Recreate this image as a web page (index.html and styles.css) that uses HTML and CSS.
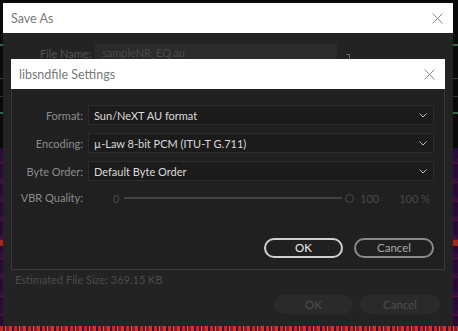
FILE: index.html
```html
<!DOCTYPE html>
<html>
<head>
<meta charset="utf-8">
<link rel="stylesheet" href="styles.css">
</head>
<body>
<div class="desktop">
  <section class="dlg save-as">
    <header class="titlebar">
      <span class="title">Save As</span>
      <svg class="close" width="11" height="11" viewBox="0 0 11 11"><path d="M0.5 0.5L10.5 10.5M10.5 0.5L0.5 10.5" stroke="#8a8a8a" stroke-width="1"/></svg>
    </header>
    <div class="body">
      <div class="file-row">
        <span class="file-lbl">File Name:</span>
        <div class="file-input">sampleNR_EQ.au</div>
        <span class="bracket"></span>
      </div>
      <div class="spacer"></div>
      <div class="est">Estimated File Size: 369.15 KB</div>
      <div class="btns">
        <button class="btn filled ok">OK</button>
        <button class="btn filled cancel">Cancel</button>
      </div>
    </div>
  </section>

  <section class="dlg settings">
    <header class="titlebar">
      <span class="title">libsndfile Settings</span>
      <svg class="close" width="11" height="11" viewBox="0 0 11 11"><path d="M0.5 0.5L10.5 10.5M10.5 0.5L0.5 10.5" stroke="#8a8a8a" stroke-width="1"/></svg>
    </header>
    <div class="body">
      <div class="form">
        <label class="lbl">Format:</label>
        <div class="select"><span>Sun/NeXT AU format</span><svg class="chev" width="8" height="5" viewBox="0 0 8 5"><path d="M0.5 0.5L4 4L7.5 0.5" fill="none" stroke="#bdbdbd" stroke-width="1"/></svg></div>
        <label class="lbl">Encoding:</label>
        <div class="select"><span>µ-Law 8-bit PCM (ITU-T G.711)</span><svg class="chev" width="8" height="5" viewBox="0 0 8 5"><path d="M0.5 0.5L4 4L7.5 0.5" fill="none" stroke="#bdbdbd" stroke-width="1"/></svg></div>
        <label class="lbl">Byte Order:</label>
        <div class="select"><span>Default Byte Order</span><svg class="chev" width="8" height="5" viewBox="0 0 8 5"><path d="M0.5 0.5L4 4L7.5 0.5" fill="none" stroke="#bdbdbd" stroke-width="1"/></svg></div>
        <label class="lbl">VBR Quality:</label>
        <div class="slider-row">
          <span class="min">0</span>
          <div class="track"></div>
          <span class="knob"></span>
          <span class="max">100</span>
          <span class="pct">100 %</span>
        </div>
      </div>
      <div class="btns">
        <button class="btn outline ok">OK</button>
        <button class="btn outline cancel">Cancel</button>
      </div>
    </div>
  </section>
</div>
</body>
</html>
```
FILE: styles.css
```css
* { box-sizing: border-box; }
html, body { margin: 0; padding: 0; }
body {
  width: 458px;
  height: 331px;
  overflow: hidden;
  font-family: Lato, "Open Sans", sans-serif;
}
.desktop {
  position: relative;
  width: 458px;
  height: 331px;
  background:
    linear-gradient(to bottom, transparent 0 44px, #2f6a48 44px 46px, transparent 46px 78px, #3a3a3a 78px 79px, transparent 79px 96px, #333 96px 97px, transparent 97px 112px, #2f6a48 112px 114px, transparent 114px),
    linear-gradient(to bottom, #0a0a0a 0 148px, transparent 148px),
    linear-gradient(to bottom, transparent 0 240px, #b02418 240px 246px, transparent 246px),
    repeating-linear-gradient(to bottom, #2a0a3c 0 7px, #3a0c40 7px 11px, #5a1238 11px 12px, #2c0838 12px 19px),
    #2a0a3a;
}
.desktop::after {
  content: "";
  position: absolute;
  left: 0; right: 0; bottom: 0;
  height: 5px;
  background: repeating-linear-gradient(90deg, #c8281c 0 3px, #5c1040 3px 5px, #e6601e 5px 6px, #8a1838 6px 9px, #d8321c 9px 12px, #3c0a40 12px 14px);
}
.dlg {
  position: absolute;
  display: flex;
  flex-direction: column;
}
.titlebar {
  height: 30px;
  background: #fff;
  display: flex;
  align-items: center;
  justify-content: space-between;
  padding: 0 10px 0 8px;
  flex: none;
}
.title {
  font-size: 12.5px;
  color: #7a7a7a;
}
.close { display: block; }

/* Save As */
.save-as {
  left: 3px;
  top: 3px;
  width: 450px;
  height: 323px;
  background: #232323;
}
.save-as .body {
  flex: 1;
  display: flex;
  flex-direction: column;
  padding: 11px 13px 12px 12px;
}
.file-row {
  display: flex;
  align-items: center;
  height: 18px;
}
.file-lbl {
  margin-left: 25px;
  width: 55px;
  font-size: 11px;
  color: #555;
  white-space: nowrap;
}
.file-input {
  width: 242px;
  height: 18px;
  background: #2b2b2b;
  font-size: 11px;
  color: #4a4a4a;
  padding: 2px 7px;
  white-space: nowrap;
}
.bracket {
  margin-left: 9px;
  margin-top: 8px;
  width: 4px;
  height: 7px;
  border-top: 1px solid #666;
  border-right: 1px solid #666;
}
.spacer { flex: 1; }
.est {
  font-size: 11px;
  color: #4c4c4c;
  line-height: 16px;
}
.save-as .btns {
  margin-top: 7px;
  display: flex;
  justify-content: flex-end;
  gap: 7px;
}
.btn {
  font-family: inherit;
  font-size: 11.5px;
  height: 19px;
  border-radius: 10px;
  padding: 0;
  line-height: 1;
}
.btn.filled {
  background: #2a2a2a;
  border: none;
  color: #4e4e4e;
}
.save-as .ok { width: 79px; }
.save-as .cancel { width: 80px; }

/* Settings */
.settings {
  left: 11px;
  top: 59px;
  width: 434px;
  height: 211px;
  background: #202020;
}
.settings .body {
  flex: 1;
  border: 1px solid #3a3a3a;
  border-top: none;
  display: flex;
  flex-direction: column;
  padding: 16px 10px 11px 5px;
}
.form {
  display: grid;
  grid-template-columns: 66px 1fr;
  column-gap: 5px;
  row-gap: 8px;
  align-items: center;
}
.lbl {
  text-align: right;
  font-size: 11px;
  color: #8c8c8c;
  white-space: nowrap;
}
.select {
  height: 20px;
  background: #1b1b1b;
  border: 1px solid #2c2c2c;
  display: flex;
  align-items: center;
  justify-content: space-between;
  padding: 0 6px 0 5px;
  font-size: 11px;
  color: #dadada;
  white-space: nowrap;
}
.chev { display: block; }
.slider-row {
  display: flex;
  align-items: center;
  height: 16px;
  margin-top: 1px;
  font-size: 11px;
  color: #4a4a4a;
  white-space: nowrap;
}
.min { margin-left: 25px; width: 6px; }
.track {
  width: 218px;
  height: 2px;
  background: #444;
  margin-left: 5px;
}
.knob {
  width: 9px;
  height: 9px;
  border: 1.5px solid #4c4c4c;
  border-radius: 50%;
  margin-left: 3px;
  flex: none;
}
.max { margin-left: 6px; }
.pct { margin-left: 20px; }
.settings .btns {
  margin-top: auto;
  display: flex;
  justify-content: flex-end;
  gap: 11px;
}
.btn.outline {
  background: transparent;
  height: 20px;
}
.settings .ok {
  width: 79px;
  border: 2px solid #d0d0d0;
  color: #f0f0f0;
}
.settings .cancel {
  width: 80px;
  border: 2px solid #8a8a8a;
  color: #a8a8a8;
}
```
